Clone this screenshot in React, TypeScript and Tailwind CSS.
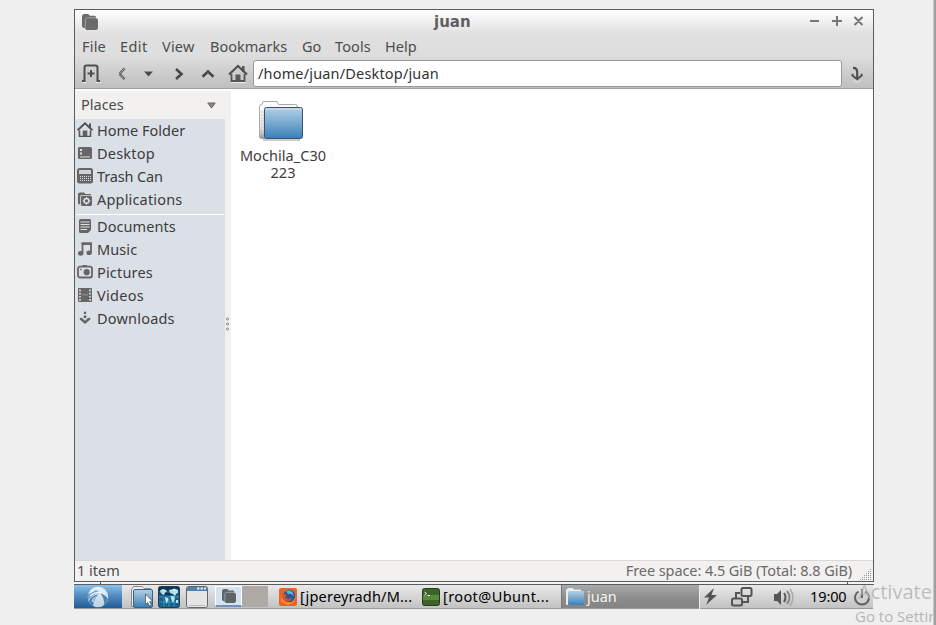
import React from 'react';

function HomeIcon() {
  return (
    <svg width="16" height="16" viewBox="0 0 16 16" fill="none" className="shrink-0">
      <path d="M2.5 8.5V14.5H13.5V8.5" fill="none" stroke="#555" strokeWidth="1.6" />
      <path d="M12 6V1.5H14V7" fill="#555" />
      <path d="M.6 8.3 8 1.4 15.4 8.3" stroke="#505050" strokeWidth="1.9" />
      <path d="M5.7 14V8.5H10.3V14Z" fill="#606060" />
      <path d="M1 15.7H15" stroke="#fff" strokeWidth=".6" />
    </svg>
  );
}

function FolderGlyph({ size, fill, line }: { size: number; fill: string; line: string }) {
  return (
    <svg width={size} height={size} viewBox="0 0 16 16" className="shrink-0">
      <path d="M0 2.5Q0 0 2.5 0H6L8 1.8H12.5Q14 1.8 14 3.5V4.3Q16 4.3 16 6.5V13.5Q16 16 13.5 16H5Q3.2 16 3 14H2.500Q0 14 0 11.500Z" fill={fill} />
      <path d="M3.300 14V6Q3.300 3.800 5.500 3.800H14" fill="none" stroke={line} strokeWidth="1" />
    </svg>
  );
}

const icons: Record<string, React.ReactNode> = {
  desktop: <><path d="M1 3.5Q1 2 2.5 2H13.5Q15 2 15 3.5V12.5Q15 14 13.5 14H2.5Q1 14 1 12.5Z" fill="#666" /><path d="M3 4h2v2H3zM3 7.5h2v2H3zM3 11.5h10v1H3z" fill="#dbe0e7" /></>,
  trash: <><path d="M2.5 0H13.5Q16 0 16 2.5V13Q16 15.500 13.500 15.500H2.500Q0 15.500 0 13V2.500Q0 0 2.500 0Z" fill="#666" /><path d="M2 2.500Q2 2 2.500 2H13.500Q14 2 14 2.500V6H2Z" fill="#cdd3d9" /><path d="M3 8.500H14M3 10.500H14M3 12.500H14" stroke="#dbe0e7" strokeDasharray="1 1" /></>,
  apps: <><path d="M1 3.5Q1 1.5 3 1.5H7L8.5 3H14V4H4.5Q3.2 4 3.2 5.5V13.5Q1 13.5 1 12Z M5 4.700H13.5Q15 4.700 15 6.2V13.5Q15 15 13.5 15H5.5Q4 15 4 13.5V6Q4 4.700 5 4.700Z" fill="#666" /><circle cx="9.5" cy="9.8" r="2.4" stroke="#dbe0e7" strokeWidth="1.5" /><path d="M9.5 6v1.2M9.5 12.4v1.2M5.7 9.8h1.2M12.1 9.8h1.2" stroke="#dbe0e7" /></>,
  documents: <><path d="M2 2.5Q2 1 3.5 1H12.5Q14 1 14 2.5V12L11 15H3.5Q2 15 2 13.5Z" fill="#666" /><path d="M3.500 4H12.500M3.500 6.500H12.500M3.500 9H12.500M3.500 11.500H10" stroke="#dbe0e7" /></>,
  music: <><path d="M5.5 12V2.5H14V11.5" stroke="#666" strokeWidth="1.8" /><path d="M4.600 1.500H14.9V4H4.600Z" fill="#666" /><ellipse cx="3.700" cy="12.400" rx="2.700" ry="2.300" fill="#666" /><ellipse cx="12.100" cy="11.800" rx="2.700" ry="2.300" fill="#666" /></>,
  pictures: <><rect x="1" y="2.700" width="14" height="10.800" rx="2" stroke="#666" strokeWidth="1.800" /><path d="M5.500 1H10V3H5.500Z" fill="#666" /><circle cx="9.700" cy="8.200" r="3.100" fill="#666" /><path d="M3.200 4.700h1.500v1.500h-1.500z" fill="#666" /></>,
  videos: <><path d="M1 2Q1 1 2 1H14Q15 1 15 2V14Q15 15 14 15H2Q1 15 1 14Z" fill="#666" /><path d="M3 2.500V14M13 2.500V14" stroke="#dbe0e7" strokeWidth="1.700" strokeDasharray="1.700 1.500" /><path d="M5 7.800H11" stroke="#999" /></>,
  downloads: <><path d="M2.800 7.800 5 8 8 10.700 11 8 13.300 7.800V9.500L8 14 2.800 9.500Z" fill="#666" /><circle cx="8" cy="2.900" r="1.300" fill="#666" /><circle cx="8" cy="6.700" r="1.500" fill="#666" /></>,
};

function Place({ icon, text, tracking = '' }: { icon: string; text: string; tracking?: string }) {
  return (
    <div className="flex h-[23px] items-start pl-[2px] pt-[3px]">
      {icon === 'home' ? <HomeIcon /> : <svg width="16" height="16" viewBox="0 0 16 16" fill="none" className="shrink-0">{icons[icon]}</svg>}
      <span className={`-mt-[2px] ml-1 whitespace-nowrap ${tracking}`}>{text}</span>
    </div>
  );
}

export default function App() {
  return (
    <div className="relative flex h-[625px] w-[936px] flex-col overflow-hidden bg-[#efefef] pl-[74px] pt-[9px] font-['Noto_Sans',sans-serif] text-[14.5px] leading-[20px] text-[#3c3c3c]">
      <main className="flex h-[573px] w-[800px] flex-col border border-[#5c5c5c] bg-[#f2f1f0]">
        <header className="flex h-[79px] shrink-0 flex-col border-b border-[#a0a0a0] bg-[linear-gradient(#fff_0,#e0e0e0_24px,#dedede_45px,#bfbfbf_78px)]">
          <div className="flex h-[24px] items-center">
            <div className="ml-[7px] w-[352px]"><FolderGlyph size={16} fill="#6b6b6b" line="#a4a4a4" /></div>
            <span className="w-[372px] font-['DejaVu_Sans',sans-serif] text-[15px] font-bold text-[#606060]">juan</span>
            <svg width="60" height="16" viewBox="0 0 60 16" fill="none" stroke="#777" strokeWidth="2" className="mb-[2px]"><path d="M4 8H13M26 8H36M31 3V13M48.500 4 56.500 12M56.500 4 48.500 12" /></svg>
          </div>
          <nav className="flex h-[25px] items-center pb-[2px] text-[#4d4d4d]">
            <span className="ml-[7px] w-[38px] tracking-[0.2px]">File</span>
            <span className="w-[42px] tracking-[0.4px]">Edit</span>
            <span className="w-[48px] tracking-[0.2px]">View</span>
            <span className="w-[92px]">Bookmarks</span>
            <span className="w-[33px]">Go</span>
            <span className="w-[50px] tracking-[0.1px]">Tools</span>
            <span>Help</span>
          </nav>
          <div className="flex h-[29px] items-center">
            <svg width="178" height="29" viewBox="0 1 178 29" fill="none" className="shrink-0">
              <path d="M7 23H9.500V9.500Q9.500 7.500 11.500 7.500H20.500Q22.500 7.500 22.500 9.500V23H25" stroke="#4f4f4f" strokeWidth="2" />
              <path d="M7 24.600H11M21 24.600H26" stroke="#eee" />
              <path d="M12.500 15.500H19.500M16 12V19" stroke="#4f4f4f" strokeWidth="2" />
              <path d="M49.500 10.500 44.500 15.800 49.500 21" stroke="#555" strokeWidth="2.800" strokeDasharray="1 .5" />
              <path d="M69 13.500H78L73.500 18.500Z" fill="#4a4a4a" />
              <path d="M101 11 106.500 16 101 21" stroke="#484848" strokeWidth="2.600" />
              <path d="M127.500 18.800 133 13.500 138.500 18.800" stroke="#484848" strokeWidth="2.600" />
              <path d="M156.500 16V23H169.500V16" stroke="#555" strokeWidth="1.800" /><path d="M167 8H169.500V14H167Z" fill="#555" />
              <path d="M154 16.500 163 8 172 16.500" stroke="#505050" strokeWidth="2.200" /><path d="M160.500 16.500H165.500V23H160.500Z" fill="#5a5a5a" />
              <path d="M156 24.600H171" stroke="#eee" />
            </svg>
            <div className="flex h-[27px] w-[589px] shrink-0 items-center rounded-[3px] border border-[#999] bg-white pb-[2px] pl-1 tracking-[0.17px] text-[#333]">/home/juan/Desktop/juan</div>
            <svg width="18" height="18" viewBox="0 0 18 18" fill="none" className="ml-[6px] shrink-0"><path d="M5 15.500 9 17.300 13 15.500" stroke="#e6e6e6" /><path d="M5 2.800Q9.200 2.800 9.200 7V14" stroke="#505050" strokeWidth="2.200" /><path d="M4.500 8.800V10.500L9.200 14.300 13.700 10.500V8.800" stroke="#505050" strokeWidth="2" /></svg>
          </div>
        </header>
        <section className="flex h-[471px] shrink-0">
          <aside className="flex w-[150px] flex-col">
            <div className="flex h-[30px] shrink-0 items-center justify-between border-t-2 border-white bg-[#f2f1f0] pl-[6px] pr-[9px] text-[#4c4c4c]">
              <span className="pb-[2px]">Places</span>
              <svg width="9" height="7" viewBox="0 0 9 7"><path d="M.8 1H8.2L4.5 6Z" fill="#888" stroke="#666" /></svg>
            </div>
            <div className="grow bg-[#dbe0e7]">
              <Place icon="home" text="Home Folder" />
              <Place icon="desktop" text="Desktop" tracking="tracking-[0.2px]" />
              <Place icon="trash" text="Trash Can" tracking="tracking-[-0.15px]" />
              <Place icon="apps" text="Applications" tracking="tracking-[0.18px]" />
              <div className="mx-px mt-[3px] h-px bg-white" />
              <Place icon="documents" text="Documents" tracking="tracking-[0.08px]" />
              <Place icon="music" text="Music" tracking="tracking-[0.1px]" />
              <Place icon="pictures" text="Pictures" tracking="tracking-[0.18px]" />
              <Place icon="videos" text="Videos" tracking="tracking-[0.3px]" />
              <Place icon="downloads" text="Downloads" tracking="tracking-[0.2px]" />
            </div>
          </aside>
          <div className="flex w-[6px] items-center border-t-2 border-white bg-[#f2f1f0] pb-[4px]">
            <svg width="6" height="14" viewBox="0 0 6 14" fill="#eee" stroke="#777" strokeWidth=".8"><circle cx="2.500" cy="2" r="1.100" /><circle cx="2.500" cy="7" r="1.100" /><circle cx="2.500" cy="12" r="1.100" /></svg>
          </div>
          <div className="grow bg-white pl-[6px] pt-[8px]">
            <div className="flex w-[92px] flex-col items-center">
              <svg width="50" height="50" viewBox="0 0 50 50" className="ml-[-4px]">
                <defs>
                  <linearGradient id="blue" x1="0" y1="0" x2="0" y2="1"><stop stopColor="#b4cfe4" /><stop offset=".55" stopColor="#72a6ce" /><stop offset="1" stopColor="#377eb7" /></linearGradient>
                  <linearGradient id="paper" x1="0" y1="0" x2="0" y2="1"><stop stopColor="#fff" /><stop offset=".7" stopColor="#e4e4e4" /><stop offset="1" stopColor="#999" /></linearGradient>
                  <linearGradient id="orb" x1="0" y1="0" x2="0" y2="1"><stop stopColor="#eaf3fa" /><stop offset="1" stopColor="#b9cfe2" /></linearGradient>
                </defs>
                <path d="M7 43H44" stroke="#ccc" strokeWidth="2" />
                <path d="M3.500 40V9.500Q3.500 7.500 6 7.500L7 4.500H21L22.500 7.500H39.500Q41.500 7.500 41.500 10V41.500H5.500Q3.500 41.500 3.500 40Z" fill="url(#paper)" stroke="#aaa" />
                <path d="M5 15H8M5 18H8M5 21H8M5 24H8M5 27H8M5 30H8M5 33H8M5 36H8" stroke="#ccc" />
                <rect x="8.500" y="10.500" width="38" height="31" rx="2" fill="url(#blue)" stroke="#3a526f" />
                <path d="M10 12H45" stroke="#d5e5f1" />
              </svg>
              <div className="flex flex-col items-center leading-[17px]"><span className="tracking-[0.05px]">Mochila_C30</span><span>223</span></div>
            </div>
          </div>
        </section>
        <footer className="flex h-[21px] shrink-0 items-center justify-between border-t border-[#d8d8d8] pl-[2px] pr-px text-[#4c4c4c]">
          <span className="pb-[2px]">1 item</span>
          <div className="flex items-center gap-[8px] text-[#6a6a6a]"><span className="pb-[2px] tracking-[-0.08px]">Free space: 4.5 GiB (Total: 8.8 GiB)</span>
            <svg width="12" height="12" viewBox="0 0 12 12" className="mt-[7px]"><path d="M10 .5h1M8 2.500h3M6 4.500h5M4 6.500h7M2 8.500h9M0 10.500h11" stroke="#999" strokeDasharray="1 1" /></svg>
          </div>
        </footer>
      </main>
      <div className="flex h-[3px] w-[800px] shrink-0 items-end border-b border-[#5c5c5c] bg-[#f4f4f4]"><div className="ml-[26px] h-[2px] w-px bg-[#555]" /><div className="ml-[746px] h-[2px] w-px bg-[#555]" /></div>
      <div className="flex h-[24px] w-[799px] shrink-0 items-center border-b border-[#999] bg-[linear-gradient(#e9e9e9,#c2c2c2)] text-black">
        <div className="flex h-[23px] w-[48px] shrink-0 items-center justify-center bg-[linear-gradient(#8cc1ed,#538cc0_45%,#215c94)]">
          <svg width="22" height="22" viewBox="0 0 22 22">
            <circle cx="11" cy="11" r="10.300" fill="url(#orb)" />
            <path d="M1 8Q5 7 9 4L13 7Q5 8 1.500 14.500Q.5 11 1 8Z" fill="#6fa3d0" />
            <path d="M2 15Q4 10 11 8.500Q7 13 6 20Q3.500 18 2 15Z" fill="#3d76ab" />
            <path d="M4 15Q6 11 10 9.500Q7 13 6.500 17Z" fill="#a9c6df" />
            <path d="M13.500 7.500Q19 9 21 13Q20 17 17 19.500Q18 13 13.500 7.500Z" fill="#4c83b5" />
            <path d="M3 10Q8 5.500 14 6.500" stroke="#f3f8fc" strokeWidth="1.200" fill="none" />
          </svg>
        </div>
        <svg width="93" height="24" viewBox="0 0 93 24" className="shrink-0">
          <path d="M9.500 21.500V4.500L11.500 1.500H20L22 3.500H28.500V21.500Z" fill="#eee" stroke="#888" /><rect x="11.500" y="4.500" width="19" height="18" rx="1.500" fill="url(#blue)" stroke="#35618b" /><path d="M23.500 9V19.500L25.700 17.500 27.500 21 29.500 20 27.700 16.700H31Z" fill="#fff" stroke="#444" strokeWidth=".7" />
          <rect x="36.500" y="1.500" width="21" height="21" rx="2" fill="#17608c" stroke="#203b57" />
          <path d="M37 2H57V9Q47 11 37 9Z" fill="#0f3556" />
          <path d="M38 5.500 41 4 44 5 45 6.500 43 7.500 42 10 40 9 38.500 7.500ZM47 5 50 4.500 52 3.500 56 5V8L54 9 53 11 51 9 48 8ZM43 12 46 13 46.500 15 44.500 19 43.500 15.500ZM48.500 11 52 11 53 13.500 51 18 49.500 15ZM54 15 56 15V18H54Z" fill="#c5ecf0" />
          <path d="M37 7H57M37 12H57M37 17H57M42 13V22M47 13V22M52 13V22" stroke="#5fc0dc" strokeWidth=".5" />
          <rect x="64.500" y="1.500" width="21" height="21" rx="2" fill="#e5e5e5" stroke="#666" /><path d="M65 3Q65 2 66 2H84Q85 2 85 3V6H65Z" fill="#5381ac" /><path d="M75 3.500H77.500M78.500 3.500H81M82 3.500H84" stroke="#dceaf5" strokeWidth="2" /><path d="M67 20.500H83" stroke="#bbb" />
        </svg>
        <div className="flex h-[21px] w-[27px] shrink-0 items-center justify-center border border-b-2 border-white border-b-[#6f93b7] bg-[#d4e3f0]"><FolderGlyph size={14} fill="#5f6468" line="#a1a9af" /></div>
        <div className="h-[21px] w-[26px] shrink-0 bg-[#ada9a4]" />
        <div className="flex h-full w-[143px] shrink-0 items-center pl-[11px]">
          <svg width="18" height="18" viewBox="0 0 18 18" className="shrink-0"><rect width="18" height="18" rx="2" fill="#e8632c" /><path d="M3 5 7 1.500 14 3 17 8 15 14 9 17 2 14Z" fill="#f6902b" /><circle cx="10" cy="8" r="6.300" fill="#285b94" /><path d="M7 3Q13 1 15 8Q12 5 9 6Z" fill="#60b4df" /><path d="M3 4Q5 6 8 7L6 9 9 11 13 10Q11 15 6 13Q2 11 3 4Z" fill="#dd5125" /></svg>
          <span className="ml-[3px] whitespace-nowrap pb-[2px] tracking-[0.2px]">[jpereyradh/M...</span>
        </div>
        <div className="flex h-full w-[150px] shrink-0 items-center pl-[11px]">
          <svg width="18" height="18" viewBox="0 0 18 18" className="shrink-0"><rect x=".5" y=".5" width="17" height="17" rx="2" fill="#3c6427" stroke="#263c1e" /><path d="M1 7H17V12H1Z" fill="#588a3d" /><path d="M2.500 4 4.500 5.500 2.500 7M5.500 7.500H8" fill="none" stroke="#fff" /></svg>
          <span className="ml-[3px] whitespace-nowrap pb-[2px] tracking-[0.4px]">[root@Ubunt...</span>
        </div>
        <div className="flex h-full w-[138px] shrink-0 items-center border-l border-[#777] bg-[linear-gradient(#aaa,#8a8a8a_60%,#858585)] pl-[3px] text-[#f4f4f4]">
          <svg width="20" height="20" viewBox="0 0 20 20"><path d="M1 17V3L3 1H8L9 2.500H16V18H2Z" fill="#ededed" /><rect x="3" y="4" width="16" height="14" rx="1" fill="url(#blue)" /></svg>
          <span className="ml-[2px] pb-[1px]">juan</span>
        </div>
        <svg width="109" height="24" viewBox="0 0 108 24" fill="none" className="shrink-0 border-l border-[#eee]">
          <path d="M14 3 4 12.500H9L6 20 17 10H11.500Z" fill="#555" />
          <rect x="41.500" y="3" width="10" height="8" rx="1.500" stroke="#555" strokeWidth="2" /><rect x="32" y="13.500" width="10" height="7" rx="1.500" stroke="#555" strokeWidth="2" /><path d="M36 13V8H40M48 11V17H43" stroke="#555" strokeWidth="2" />
          <path d="M74 9H77L81 5V20L77 16H74Z" fill="#555" /><path d="M84 8Q87 12 84 17" stroke="#555" strokeWidth="2" /><path d="M87 6Q92 12 87 19" stroke="#888" strokeWidth="2" /><path d="M90 4Q96 12 90 21" stroke="#aaa" strokeWidth="1.500" />
        </svg>
        <span className="ml-[2px] w-[43px] shrink-0 whitespace-nowrap pb-[2px] tracking-[-0.1px]">19:00</span>
        <svg width="18" height="20" viewBox="0 0 18 20" fill="none"><path d="M5.500 4.500A7 7 0 1 0 12.500 4.500M9 2V11" stroke="#606060" strokeWidth="2" /></svg>
      </div>
      <div className="absolute left-[858px] top-[578px] whitespace-nowrap font-['Open_Sans',sans-serif] text-[20px] leading-[28px] text-[#b4b4b4]/85">Activate</div>
      <div className="absolute left-[855px] top-[606px] whitespace-nowrap font-['Open_Sans',sans-serif] text-[15px] leading-[20px] text-[#b5b5b5]">Go to Settings</div>
      <div className="absolute bottom-0 right-0 top-0 w-[3px] border-l border-[#c8c8c8] bg-[#a0a0a0]" />
    </div>
  );
}
